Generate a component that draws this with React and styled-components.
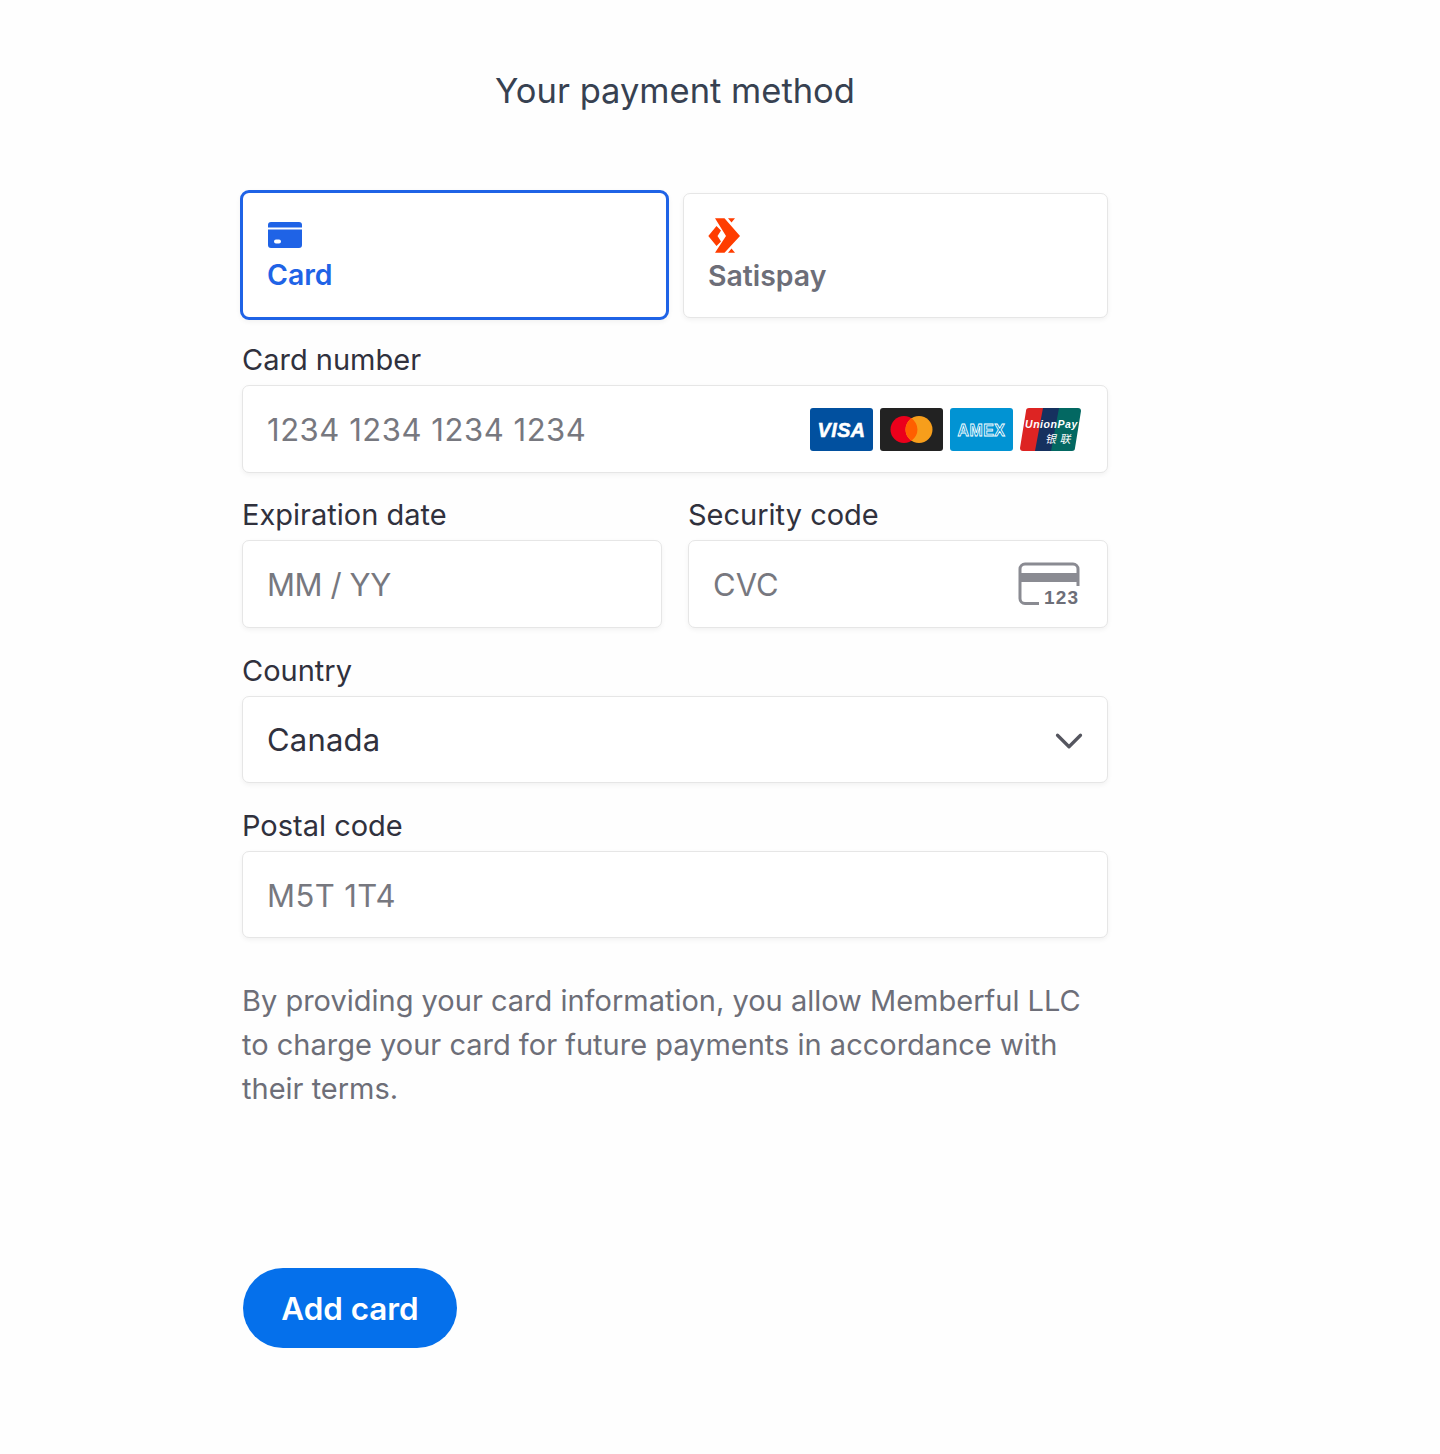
import React from 'react'
import styled, { createGlobalStyle } from 'styled-components'
import { ChevronDown } from 'lucide-react'

const Global = createGlobalStyle`
  html, body {
    margin: 0;
    background: #fefefe;
    font-family: Inter, "Liberation Sans", sans-serif;
    color: #30313d;
  }
  * { box-sizing: border-box; }
`

const Page = styled.main`
  width: 1440px;
  height: 1454px;
  padding: 70px 332px 0 242px;
`

const Title = styled.h1`
  margin: 0 0 81px;
  height: 42px;
  font-size: 34.5px;
  line-height: 42px;
  font-weight: 400;
  text-align: center;
  color: #374151;
`

const Tabs = styled.div`
  display: grid;
  grid-template-columns: 425px 425px;
  justify-content: space-between;
  height: 125px;
`

const Tab = styled.div`
  display: flex;
  flex-direction: column;
  height: ${p => (p.$active ? '130px' : '125px')};
  margin: ${p => (p.$active ? '-3px 0 0 -2px' : '0')};
  width: ${p => (p.$active ? '429px' : '425px')};
  padding: ${p => (p.$active ? '25px' : '24px 25px')};
  background: #fff;
  border-radius: ${p => (p.$active ? '9px' : '7px')};
  border: ${p => (p.$active ? '3px solid #1f63e6' : '1px solid #e6e6e6')};
  box-shadow: 0 2px 5px rgba(0, 0, 0, 0.05);
  color: ${p => (p.$active ? '#1f63e6' : '#6d6e78')};
`

const TabIcon = styled.div`
  height: ${p => (p.$active ? '36px' : '35px')};
  margin-left: ${p => (p.$active ? '0' : '-1px')};
  display: flex;
  align-items: center;
`

const TabLabel = styled.span`
  margin: 6px 0 0 -1px;
  font-size: 28.4px;
  line-height: 34px;
  font-weight: 600;
`

const Grid = styled.div`
  display: grid;
  grid-template-columns: 420px 420px;
  justify-content: space-between;
  margin-top: 26px;
  row-gap: 26.8px;
`

const Field = styled.label`
  display: block;
  grid-column: ${p => (p.$wide ? '1 / -1' : 'auto')};
`

const LabelText = styled.div`
  height: 30px;
  margin-bottom: 11px;
  font-size: 29px;
  line-height: 32px;
  color: #30313d;
`

const Control = styled.div`
  height: 87.5px;
  padding: 1px 25px 0 24px;
  display: flex;
  align-items: center;
  justify-content: space-between;
  background: #fff;
  border: 1px solid #e6e6e6;
  border-radius: 7px;
  box-shadow: 0 2px 5px rgba(0, 0, 0, 0.05);
  font-size: 31px;
  letter-spacing: ${p => p.$tracking || 0}px;
  color: ${p => (p.$filled ? '#30313d' : '#77787f')};
`

const Brands = styled.div`
  display: flex;
  gap: 7px;
  margin-right: 1px;
`

const SelectArrow = styled(ChevronDown)`
  margin: 2px -10px 0 0;
`

const Note = styled.p`
  margin: 41px 0 0;
  font-size: 29px;
  line-height: 44px;
  color: #6d6e78;
`

const Submit = styled.button`
  display: block;
  margin: 156.6px 0 0 1px;
  padding: 2px 0 0;
  width: 214px;
  height: 80px;
  border: 0;
  border-radius: 40px;
  background: #0570eb;
  color: #fff;
  font-family: inherit;
  font-size: 31.4px;
  font-weight: 600;
`

const CardIcon = () => (
  <svg width="34" height="26" viewBox="0 0 34 26">
    <path d="M0 5.500V3a3 3 0 0 1 3-3h28a3 3 0 0 1 3 3v2.500z" fill="#1f63e6" />
    <path fillRule="evenodd" fill="#1f63e6" d="M0 7.500h34V23a3 3 0 0 1-3 3H3a3 3 0 0 1-3-3zM8 17.500a2 2 0 0 0 0 4h3a2 2 0 0 0 0-4z" />
  </svg>
)

const SatispayIcon = () => (
  <svg width="33" height="35" viewBox="0 0 33 35">
    <path fill="#ff3d00" d="M7 .300h9.500L32 18 16.500 34.700H7L18 18z" />
    <path fill="#ff3d00" d="M.300 18L8.500 8l4.500 4.500L9.500 18l3.500 5.500L8.500 28z" />
    <path fill="#ff3d00" d="M20 .300h7L23.500 4.500zM20 34.700h7l-3.500-4.200z" />
  </svg>
)

const Visa = () => (
  <svg width="63" height="43" viewBox="0 0 63 43">
    <rect width="63" height="43" rx="3" fill="#01509f" />
    <text x="31.500" y="29" textAnchor="middle" fill="#fff" stroke="#fff" strokeWidth="0.6" fontFamily="Liberation Sans" fontStyle="italic" fontWeight="700" fontSize="21" textLength="48" lengthAdjust="spacingAndGlyphs">VISA</text>
  </svg>
)

const Mastercard = () => (
  <svg width="63" height="43" viewBox="0 0 63 43">
    <rect width="63" height="43" rx="3" fill="#222" />
    <circle cx="24" cy="21.500" r="13.500" fill="#eb001b" />
    <circle cx="39" cy="21.500" r="13.500" fill="#f79e1b" />
    <path d="M31.500 10.300a13.500 13.500 0 0 1 0 22.400a13.500 13.500 0 0 1 0-22.400z" fill="#ff5f00" />
  </svg>
)

const Amex = () => (
  <svg width="63" height="43" viewBox="0 0 63 43">
    <rect width="63" height="43" rx="3" fill="#0193d3" />
    <text x="31.500" y="27.500" textAnchor="middle" fill="#0193d3" stroke="#fff" strokeWidth="0.8" fontFamily="Liberation Sans" fontWeight="700" fontSize="16" textLength="48" lengthAdjust="spacingAndGlyphs">AMEX</text>
  </svg>
)

const UnionPay = () => (
  <svg width="61" height="43" viewBox="0 0 61 43">
    <path d="M9 0h18l-8 43H3a3 3 0 0 1-3-3L6 3a3 3 0 0 1 3-3z" fill="#dd2423" />
    <path d="M23 0h20l-8 43H15z" fill="#16315f" />
    <path d="M39 0h19a3 3 0 0 1 3 3l-6 37a3 3 0 0 1-3 3H31z" fill="#036862" />
    <text x="5" y="20" fill="#fff" fontFamily="Liberation Sans" fontStyle="italic" fontWeight="700" fontSize="10.500">UnionPay</text>
    <text x="25" y="35" fill="#fff" fontFamily="Noto Sans CJK SC" fontStyle="italic" fontSize="11" textLength="26">银联</text>
  </svg>
)

const CvcIcon = () => (
  <svg width="64" height="46" viewBox="0 0 64 46">
    <path d="M21 41.500H7a5 5 0 0 1-5-5V7a5 5 0 0 1 5-5h48a5 5 0 0 1 5 5v17" fill="none" stroke="#8a8b92" strokeWidth="3" />
    <rect x="2" y="11" width="58" height="9" fill="#8a8b92" />
    <rect x="23" y="25" width="41" height="19" fill="#fff" />
    <text x="26" y="41.500" fill="#6d6e78" fontFamily="Liberation Sans" fontWeight="700" fontSize="19" letterSpacing="1.200">123</text>
  </svg>
)

export default function App() {
  return (
    <Page>
      <Global />
      <Title>Your payment method</Title>
      <Tabs>
        <Tab $active>
          <TabIcon $active><CardIcon /></TabIcon>
          <TabLabel>Card</TabLabel>
        </Tab>
        <Tab>
          <TabIcon><SatispayIcon /></TabIcon>
          <TabLabel>Satispay</TabLabel>
        </Tab>
      </Tabs>
      <Grid>
        <Field $wide>
          <LabelText>Card number</LabelText>
          <Control $tracking={0.55}>
            1234 1234 1234 1234
            <Brands>
              <Visa />
              <Mastercard />
              <Amex />
              <UnionPay />
            </Brands>
          </Control>
        </Field>
        <Field>
          <LabelText>Expiration date</LabelText>
          <Control $tracking={-0.4}>MM / YY</Control>
        </Field>
        <Field>
          <LabelText>Security code</LabelText>
          <Control>
            CVC
            <CvcIcon />
          </Control>
        </Field>
        <Field $wide>
          <LabelText>Country</LabelText>
          <Control $filled $tracking={0.2}>
            Canada
            <SelectArrow size={46} color="#55565f" strokeWidth={1.7} />
          </Control>
        </Field>
        <Field $wide>
          <LabelText>Postal code</LabelText>
          <Control $tracking={0.4}>M5T 1T4</Control>
        </Field>
      </Grid>
      <Note>By providing your card information, you allow Memberful LLC to charge your card for future payments in accordance with their terms.</Note>
      <Submit>Add card</Submit>
    </Page>
  )
}
